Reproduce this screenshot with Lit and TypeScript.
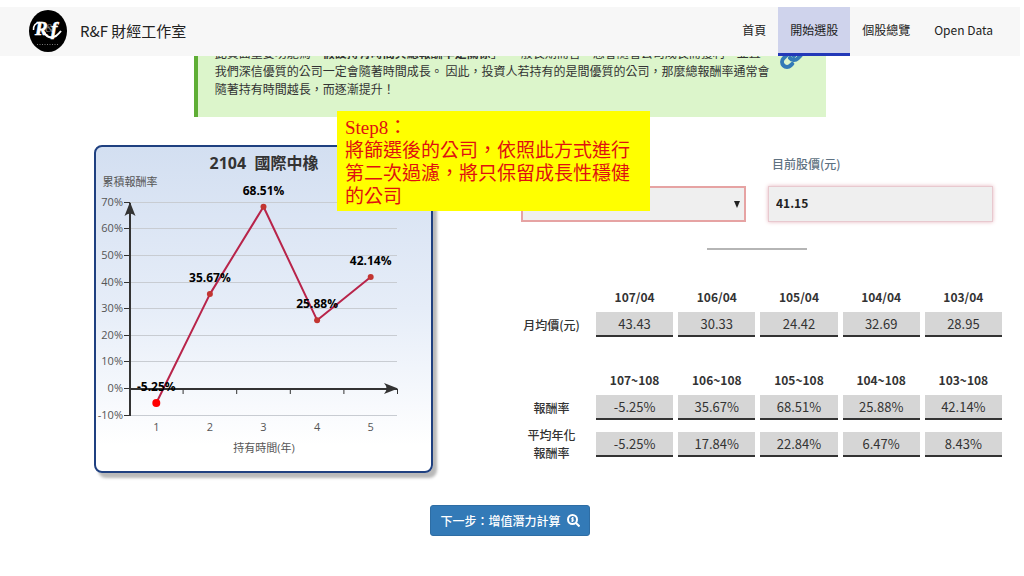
import { LitElement, html, svg, css } from "lit";
import { customElement } from "lit/decorators.js";
import { classMap } from "lit/directives/class-map.js";

const NAV = [
  { label: "首頁", active: false },
  { label: "開始選股", active: true },
  { label: "個股總覽", active: false },
  { label: "Open Data", active: false },
];

const PRICES = {
  heads: ["107/04", "106/04", "105/04", "104/04", "103/04"],
  rows: [{ label: ["月均價(元)"], values: ["43.43", "30.33", "24.42", "32.69", "28.95"] }],
};

const RETURNS = {
  heads: ["107~108", "106~108", "105~108", "104~108", "103~108"],
  rows: [
    { label: ["報酬率"], values: ["-5.25%", "35.67%", "68.51%", "25.88%", "42.14%"] },
    { label: ["平均年化", "報酬率"], values: ["-5.25%", "17.84%", "22.84%", "6.47%", "8.43%"] },
  ],
};

@customElement("return-chart")
class ReturnChart extends LitElement {
  static styles = css`
    :host { display: block; }
    .card {
      border: 2px solid #1f4080;
      border-radius: 8px;
      background: linear-gradient(#d3dff1, #e6edf8 50%, #ffffff 92%);
      box-shadow: 4px 5px 3px #b9b9b9;
    }
    .plot { display: block; width: 100%; height: auto; }
    text { font-family: "Open Sans", "Noto Sans CJK TC", sans-serif; font-size: 11px; fill: #555; }
    .title { font-size: 16px; font-weight: 700; fill: #333; white-space: pre; }
    .value { font-size: 12px; font-weight: 700; fill: #000; text-anchor: middle; }
    .end { text-anchor: end; }
    .mid { text-anchor: middle; }
    .grid { stroke: #c8ccd2; stroke-width: 1; }
    .axis { stroke: #333; stroke-width: 2; }
    .tick { stroke: #333; stroke-width: 1; }
    .arrow { fill: #333; }
    .line { fill: none; stroke: #b8244a; stroke-width: 2; stroke-linejoin: round; }
    .dot { fill: #c23531; }
    .first { fill: #ff0000; }
  `;

  private values = [-5.25, 35.67, 68.51, 25.88, 42.14];

  private x(i: number) { return 60.3 + i * 53.6; }
  private y(v: number) { return 242 - v * 2.66; }

  render() {
    const levels = [70, 60, 50, 40, 30, 20, 10, 0, -10];
    const points = this.values.map((v, i) => `${this.x(i)},${this.y(v)}`).join(" ");
    return html`
      <div class="card">
        <svg class="plot" viewBox="0 0 335 324" role="img" aria-label="累積報酬率">
          ${levels.map((l) => svg`
            <line class="grid" x1="34" x2="301" y1=${Math.round(this.y(l)) - 0.5} y2=${Math.round(this.y(l)) - 0.5}></line>
            <line class="tick" x1="28" x2="34" y1=${Math.round(this.y(l)) - 0.5} y2=${Math.round(this.y(l)) - 0.5}></line>
            <text class="end" x="27" y=${Math.round(this.y(l)) + 3}>${l}%</text>`)}
          <line class="axis" x1="34" x2="34" y1="56" y2="269"></line>
          <line class="axis" x1="34" x2="301" y1="242" y2="242"></line>
          ${[1, 2, 3, 4, 5].map((n) => svg`
            <line class="tick" x1=${33.5 + n * 53.6} x2=${33.5 + n * 53.6} y1="242" y2="247"></line>
            <text class="mid" x=${this.x(n - 1)} y="284">${n}</text>`)}
          <path class="arrow" d="M34 55 L39.5 69 Q34 64 28.500 69 Z"></path>
          <path class="arrow" d="M302 241.500 L288 236 Q293 241.500 288 247 Z"></path>
          <text class="title mid" x="168" y="22">2104  國際中橡</text>
          <text class="mid" x="34" y="39">累積報酬率</text>
          <text class="mid" x="168" y="305">持有時間(年)</text>
          <polyline class="line" points=${points}></polyline>
          ${this.values.map((v, i) => svg`
            <circle class="dot ${i === 0 ? "first" : ""}" cx=${this.x(i)} cy=${this.y(v)} r=${i === 0 ? 4 : 3}></circle>
            <text class="value" x=${this.x(i)} y=${this.y(v) - 12}>${v.toFixed(2)}%</text>`)}
        </svg>
      </div>`;
  }
}

@customElement("app-root")
class AppRoot extends LitElement {
  static styles = css`
    :host {
      display: block;
      position: relative;
      box-sizing: border-box;
      min-height: 100vh;
      padding: 7px 4px 0 0;
      background: #fff;
      color: #333;
      font-family: "Noto Sans CJK TC", sans-serif;
      font-size: 12px;
      line-height: 18px;
    }
    .bar {
      display: flex;
      justify-content: space-between;
      height: 49px;
      padding: 0 15px 0 29px;
      background: #f7f7f7;
    }
    .brand { display: flex; align-items: center; gap: 13px; padding-bottom: 2px; font-size: 15px; color: #222; text-decoration: none; }
    .logo { width: 38px; height: 42px; }
    .mark { font: italic 700 19px "Liberation Serif", serif; fill: #fff; stroke: #fff; stroke-width: 0.6; }
    .amp { font: italic 400 12px "Liberation Serif", serif; fill: #777; stroke: none; }
    .nav { display: flex; }
    .link {
      display: flex;
      align-items: center;
      padding: 0 12px;
      border-bottom: 3px solid transparent;
      color: #222;
      text-decoration: none;
    }
    .link.on { background: #cfd3ec; border-color: #2238b8; }
    .strip { display: flex; justify-content: center; align-items: flex-end; height: 61px; overflow: hidden; }
    .note {
      display: flex;
      gap: 8px;
      box-sizing: border-box;
      width: 62%;
      padding: 12px 22px 19px 17px;
      border-left: 4px solid #5fae35;
      background: #dcf5cb;
    }
    .words { flex: 1; margin: 0; white-space: nowrap; }
    .chain { width: 24px; height: 26px; fill: none; stroke: #337ab7; stroke-width: 4; stroke-linecap: round; }
    .main {
      display: grid;
      grid-template-columns: 339fr 486fr;
      gap: 88px;
      padding: 28px 13px 0 94px;
    }
    .form { display: grid; grid-template-columns: 1fr 1fr; align-items: end; gap: 22px; padding: 10px 14px 0 0; }
    .field { display: grid; gap: 13px; }
    .label { padding-left: 4px; color: #5f7282; font-weight: 500; }
    .box {
      box-sizing: border-box;
      width: 100%;
      height: 36px;
      padding: 0 7px 4px;
      border: 1px solid #e8c9cf;
      border-radius: 0;
      background: #efefef;
      color: #222;
      font: 700 12px "Noto Sans CJK TC", sans-serif;
    }
    .glow { box-shadow: 0 0 4px #e6b4bd; }
    .pick { position: relative; }
    .pick .box { appearance: none; border: 2px solid #e6a3a3; }
    .caret { position: absolute; right: 6px; bottom: 14px; width: 6px; height: 7px; fill: #222; }
    .rule { width: 100px; height: 2px; margin: 26px auto 32px 186px; border: 0; background: #b5b5b5; }
    .data {
      width: calc(100% + 5px);
      margin: 0 0 22px -5px;
      table-layout: fixed;
      border-collapse: separate;
      border-spacing: 5px 6px;
      text-align: center;
    }
    .data th, .data td { padding: 0; }
    .data .side { width: 61px; padding-right: 9px; white-space: nowrap; font-weight: 500; }
    .line { display: block; }
    .value {
      display: block;
      height: 23px;
      border-bottom: 2px solid #333;
      background: #d6d6d6;
      font-size: 13px;
      line-height: 23px;
    }
    .foot { display: flex; justify-content: center; padding: 15px 0; }
    .next {
      display: flex;
      align-items: center;
      gap: 6px;
      height: 31px;
      padding: 0 9px;
      border: 1px solid #2e6da4;
      border-radius: 3px;
      background: #337ab7;
      color: #fff;
      font: 500 12px "Noto Sans CJK TC", sans-serif;
    }
    .lens { width: 13px; height: 13px; fill: none; stroke: #fff; stroke-width: 2; }
    .tip {
      position: absolute;
      left: 337px;
      top: 111px;
      box-sizing: border-box;
      width: 313px;
      padding: 5px 8px 3px;
      background: #ffff00;
      color: #e01010;
      font: 400 19px/23px "Liberation Serif", "DFKai-SB", "BiauKai", "Noto Sans CJK TC", serif;
    }
  `;

  private table(data: typeof RETURNS) {
    return html`
      <table class="data">
        <thead>
          <tr><td class="side"></td>${data.heads.map((h) => html`<th scope="col">${h}</th>`)}</tr>
        </thead>
        <tbody>
          ${data.rows.map((r) => html`
            <tr>
              <th class="side" scope="row">${r.label.map((l) => html`<span class="line">${l}</span>`)}</th>
              ${r.values.map((v) => html`<td><span class="value">${v}</span></td>`)}
            </tr>`)}
        </tbody>
      </table>`;
  }

  render() {
    return html`
      <header class="bar">
        <a class="brand" href="#">
          <svg class="logo" viewBox="0 0 38 42" aria-hidden="true">
            <ellipse cx="19" cy="21" rx="19" ry="21" fill="#000"></ellipse>
            <text class="mark" x="6" y="25">R</text>
            <text class="amp" x="16" y="22">&amp;</text>
            <text class="mark" x="22" y="25">f</text>
            <path d="M4.500 20 Q4 13 11 12.500" fill="none" stroke="#fff" stroke-width="1.500"></path>
            <path d="M15 22 Q19 30 27 26 Q30 23.500 32 21" fill="none" stroke="#fff" stroke-width="2"></path>
            <path d="M8 34.500 H30" stroke="#777" stroke-width="1" stroke-dasharray="1 1.500"></path>
          </svg>
          <span>R&amp;F 財經工作室</span>
        </a>
        <nav class="nav">
          ${NAV.map((n) => html`<a class=${classMap({ link: true, on: n.active })} href="#">${n.label}</a>`)}
        </nav>
      </header>
      <div class="strip">
        <div class="note">
          <p class="words">
            此頁面重要功能為「<b>假設持有時間與總報酬率是關係</b>」。一般長期而言，您會隨著公司成長而獲利，並且<br />
            我們深信優質的公司一定會隨著時間成長。 因此，投資人若持有的是間優質的公司，那麼總報酬率通常會<br />
            隨著持有時間越長，而逐漸提升！
          </p>
          <svg class="chain" viewBox="0 0 24 24" aria-hidden="true">
            <path d="M10 13a5 5 0 0 0 7.540.54l3-3a5 5 0 0 0-7.070-7.070l-1.720 1.710"></path>
            <path d="M14 11a5 5 0 0 0-7.540-.54l-3 3a5 5 0 0 0 7.070 7.070l1.710-1.710"></path>
          </svg>
        </div>
      </div>
      <main class="main">
        <return-chart></return-chart>
        <section>
          <form class="form">
            <div class="field pick">
              <select class="box" aria-label="個股"><option></option></select>
              <svg class="caret" viewBox="0 0 6 7" aria-hidden="true"><path d="M0 0H6L3 7Z"></path></svg>
            </div>
            <div class="field">
              <label class="label" for="price">目前股價(元)</label>
              <input class="box glow" id="price" value="41.15" readonly />
            </div>
          </form>
          <hr class="rule" />
          ${this.table(PRICES)}
          ${this.table(RETURNS)}
        </section>
      </main>
      <footer class="foot">
        <button class="next" type="button">
          下一步：增值潛力計算
          <svg class="lens" viewBox="0 0 13 13" aria-hidden="true">
            <circle cx="5.500" cy="5.500" r="4.500"></circle>
            <path d="M9 9L12.500 12.500"></path>
            <path d="M7 4H5.200a.7.7 0 0 0 0 1.500h.8a.7.7 0 0 1 0 1.500H4M5.500 3v5" stroke-width="0.9"></path>
          </svg>
        </button>
      </footer>
      <aside class="tip">Step8：<br />將篩選後的公司，依照此方式進行第二次過濾，將只保留成長性穩健的公司</aside>
    `;
  }
}
